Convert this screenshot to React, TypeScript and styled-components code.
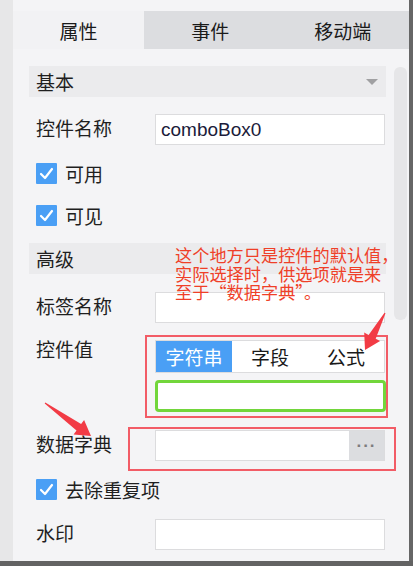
import React from 'react'
import styled, { createGlobalStyle } from 'styled-components'

const GlobalStyle = createGlobalStyle`
  html, body {
    margin: 0;
    padding: 0;
    background: #666666;
  }
  body {
    font-family: "Liberation Sans", "Noto Sans CJK SC", sans-serif;
    color: #1f1f1f;
  }
`

const Frame = styled.div`
  width: 413px;
  height: 566px;
  display: flex;
  flex-direction: column;
  overflow: hidden;
  position: relative;
`

const Screen = styled.div`
  flex: 1;
  display: flex;
  margin-right: 4px;
  min-height: 0;
`

const LeftStrip = styled.div`
  width: 15px;
  background: #e7e7e8;
`

const Panel = styled.div`
  flex: 1;
  display: flex;
  flex-direction: column;
  background: #f4f4f6;
`

const TopStrip = styled.div`
  height: 11px;
  background: #f4f4f6;
`

const Tabs = styled.div`
  display: grid;
  grid-template-columns: 131px 1fr 1fr;
  height: 38px;
  background: #dcdde0;
`

const Tab = styled.div<{ $active?: boolean }>`
  display: flex;
  align-items: center;
  justify-content: center;
  font-size: 19px;
  background: ${p => (p.$active ? '#f2f2f4' : '#dcdde0')};
  color: #1a1a1a;
`

const Body = styled.div`
  flex: 1;
  display: flex;
  min-height: 0;
`

const Content = styled.div`
  flex: 1;
  padding: 0 0 0 16px;
  display: flex;
  flex-direction: column;
`

const ScrollTrack = styled.div`
  width: 13px;
  margin: 18px 2px 0 8px;
  height: 253px;
  border-radius: 6px;
  background: #e6e6e8;
`

const SectionHeader = styled.div<{ $mt: number }>`
  margin-top: ${p => p.$mt}px;
  height: 31px;
  background: #ebebed;
  display: flex;
  align-items: center;
  justify-content: space-between;
  padding: 0 8px 0 7px;
  font-size: 19px;
`

const Caret = styled.span`
  width: 0;
  height: 0;
  border-left: 6px solid transparent;
  border-right: 6px solid transparent;
  border-top: 6px solid #a0a0a2;
`

const Row = styled.div<{ $mt: number; $top?: boolean }>`
  margin-top: ${p => p.$mt}px;
  display: flex;
  align-items: ${p => (p.$top ? 'flex-start' : 'center')};
  position: relative;
`

const Label = styled.div`
  width: 119px;
  padding-left: 7px;
  font-size: 19px;
  line-height: 22px;
  flex-shrink: 0;
`

const Input = styled.div`
  width: 230px;
  height: 31px;
  box-sizing: border-box;
  background: #fff;
  border: 1px solid #dcdcde;
  display: flex;
  align-items: center;
  padding-left: 5px;
  font-size: 19px;
  color: #1b1b3a;
`

const Stack = styled.div`
  display: flex;
  flex-direction: column;
  gap: 7px;
  position: relative;
`

const Highlight = styled.div<{ $inset: string }>`
  position: absolute;
  inset: ${p => p.$inset};
  border: 2px solid #f25c66;
  pointer-events: none;
`

const Segmented = styled.div`
  width: 230px;
  height: 33px;
  display: grid;
  grid-template-columns: repeat(3, 1fr);
  box-sizing: border-box;
  border: 1px solid #dcdcde;
  background: #fff;
`

const Segment = styled.div<{ $active?: boolean }>`
  display: flex;
  align-items: center;
  justify-content: center;
  font-size: 19px;
  background: ${p => (p.$active ? '#4a9ff5' : '#fff')};
  color: ${p => (p.$active ? '#fff' : '#1a1a1a')};
`

const GreenInput = styled.div`
  width: 231px;
  height: 32px;
  box-sizing: border-box;
  border: 3px solid #72d63b;
  border-radius: 4px;
  background: #fff;
`

const PickerInput = styled.div`
  width: 230px;
  height: 31px;
  box-sizing: border-box;
  border: 1px solid #dcdcde;
  display: flex;
  background: #fff;
`

const PickerField = styled.div`
  flex: 1;
`

const PickerButton = styled.div`
  width: 35px;
  background: #dcdde0;
  color: #7c7c7e;
  font-size: 17px;
  font-weight: bold;
  letter-spacing: 1px;
  display: flex;
  align-items: center;
  justify-content: center;
`

const CheckRow = styled.div<{ $mt: number }>`
  margin-top: ${p => p.$mt}px;
  height: 21px;
  display: flex;
  align-items: center;
  gap: 8px;
  padding-left: 7px;
  font-size: 19px;
`

const CheckBox = styled.span`
  width: 21px;
  height: 21px;
  background: #4a9ff5;
  display: flex;
  align-items: center;
  justify-content: center;
  border-radius: 1px;
`

const BottomBar = styled.div`
  height: 5px;
  background: #636363;
`

const Note = styled.div`
  position: absolute;
  left: 175px;
  top: 246px;
  font-family: "Noto Sans CJK SC", sans-serif;
  font-size: 17.2px;
  line-height: 18.5px;
  color: #ef3f28;
  white-space: nowrap;
`

const NoteLine = styled.div``

const ArrowLayer = styled.svg`
  position: absolute;
  left: 0;
  top: 0;
  pointer-events: none;
`

const Check = () => (
  <CheckBox>
    <svg width="15" height="13" viewBox="0 0 15 13">
      <path d="M2 7 L6 11 L13 2" stroke="#fff" strokeWidth="2.2" fill="none" strokeLinecap="round" strokeLinejoin="round" />
    </svg>
  </CheckBox>
)

// tapered annotation arrow, tail to tip
const arrowPoints = (x1: number, y1: number, x2: number, y2: number) => {
  const dx = x2 - x1
  const dy = y2 - y1
  const len = Math.hypot(dx, dy)
  const ux = dx / len
  const uy = dy / len
  const nx = -uy
  const ny = ux
  const headLen = 15
  const neck = 4
  const headW = 9
  const bx = x2 - ux * headLen
  const by = y2 - uy * headLen
  const p = (x: number, y: number) => `${x.toFixed(1)},${y.toFixed(1)}`
  return [
    p(x1 + nx * 0.6, y1 + ny * 0.6),
    p(bx + nx * neck, by + ny * neck),
    p(bx + nx * headW, by + ny * headW),
    p(x2, y2),
    p(bx - nx * headW, by - ny * headW),
    p(bx - nx * neck, by - ny * neck),
    p(x1 - nx * 0.6, y1 - ny * 0.6),
  ].join(' ')
}

const App: React.FC = () => {
  return (
    <Frame>
      <GlobalStyle />
      <Screen>
        <LeftStrip />
        <Panel>
          <TopStrip />
          <Tabs>
            <Tab $active>属性</Tab>
            <Tab>事件</Tab>
            <Tab>移动端</Tab>
          </Tabs>
          <Body>
            <Content>
              <SectionHeader $mt={17}>
                基本
                <Caret />
              </SectionHeader>
              <Row $mt={17}>
                <Label>控件名称</Label>
                <Input>comboBox0</Input>
              </Row>
              <CheckRow $mt={18}>
                <Check />
                可用
              </CheckRow>
              <CheckRow $mt={21}>
                <Check />
                可见
              </CheckRow>
              <SectionHeader $mt={17}>高级</SectionHeader>
              <Row $mt={18}>
                <Label>标签名称</Label>
                <Input />
              </Row>
              <Row $mt={17} $top>
                <Label>控件值</Label>
                <Stack>
                  <Segmented>
                    <Segment $active>字符串</Segment>
                    <Segment>字段</Segment>
                    <Segment>公式</Segment>
                  </Segmented>
                  <GreenInput />
                  <Highlight $inset="-5px -2px -6px -10px" />
                </Stack>
              </Row>
              <Row $mt={18}>
                <Label>数据字典</Label>
                <PickerInput>
                  <PickerField />
                  <PickerButton>···</PickerButton>
                </PickerInput>
                <Highlight $inset="-3px -10px -10px 99px" />
              </Row>
              <CheckRow $mt={18}>
                <Check />
                去除重复项
              </CheckRow>
              <Row $mt={19}>
                <Label>水印</Label>
                <Input />
              </Row>
            </Content>
            <ScrollTrack />
          </Body>
        </Panel>
      </Screen>
      <BottomBar />
      <Note>
        <NoteLine>这个地方只是控件的默认值，</NoteLine>
        <NoteLine>实际选择时，供选项就是来</NoteLine>
        <NoteLine>至于“数据字典”。</NoteLine>
      </Note>
      <ArrowLayer width="413" height="566">
        <polygon points={arrowPoints(385, 313, 365, 350)} fill="#f23b45" />
        <polygon points={arrowPoints(45, 403, 91, 436)} fill="#f23b45" />
      </ArrowLayer>
    </Frame>
  )
}

export default App
